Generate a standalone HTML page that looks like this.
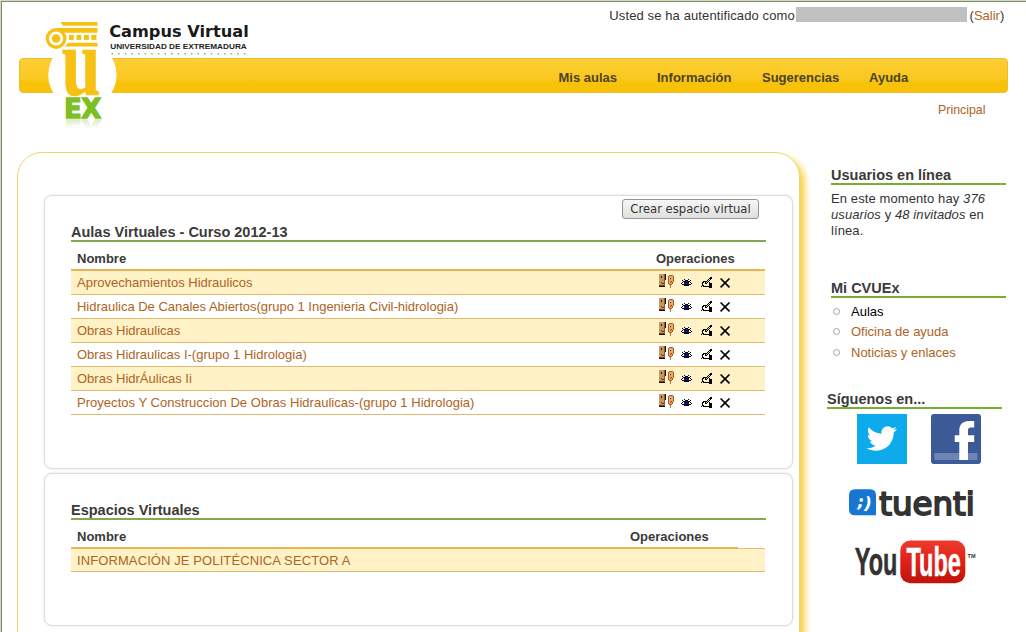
<!DOCTYPE html>
<html lang="es">
<head>
<meta charset="utf-8">
<title>Campus Virtual - Universidad de Extremadura</title>
<style>
html,body{margin:0;padding:0;}
body{width:1026px;height:632px;overflow:hidden;background:#fff;position:relative;font-family:"Liberation Sans",Arial,sans-serif;font-size:13px;color:#333;}
.abs{position:absolute;}
a{color:#ad6424;text-decoration:none;}
#frame-top{left:0;top:0;width:1026px;height:1px;background:#cfdcbd;}
#frame-top2{left:1px;top:1px;width:1025px;height:1px;background:#7c8a6c;}
#frame-left{left:0;top:0;width:1px;height:632px;background:#cfdcbd;}
#frame-left2{left:1px;top:1px;width:1px;height:631px;background:#7c8a6c;}
#nav{left:19px;top:58px;width:987px;height:33px;border:1px solid #f0bc2c;border-radius:4px;background:linear-gradient(#fbce32,#f9c720 62%,#f7c209 70%,#f7c207);}
#nav a{position:absolute;top:11px;font-weight:bold;font-size:13px;line-height:15px;color:#4b4323;white-space:nowrap;}
.lg{position:absolute;top:8px;font-size:13px;line-height:15px;white-space:nowrap;color:#333;}
#blk{left:796px;top:7px;width:171px;height:15px;background:#c0c0c0;}
#crumb{left:938px;top:103px;font-size:12.4px;line-height:14px;}
#main{left:17px;top:152px;width:781px;height:520px;border:1px solid #f1d468;border-radius:25px;box-shadow:5px 5px 6px #fbd24a;background:#fff;}
.box{border:1px solid #dcdcdc;border-radius:8px;box-shadow:0 0 3px #e4e4e4;background:#fff;}
h2{position:absolute;margin:0;font-size:14.5px;line-height:16px;font-weight:bold;color:#3a3a3a;white-space:nowrap;}
.gl{position:absolute;height:2px;background:#86a654;}
.gl.s{background:#7aae30;}
.th{position:absolute;font-weight:bold;font-size:13px;line-height:15px;color:#3a3a3a;}
.ol{position:absolute;height:2px;background:#e8b455;}
.row{position:absolute;left:71px;width:694px;height:23px;border-bottom:1px solid #e0bc72;}
.row.odd{background:#fef2c6;}
.row a{position:absolute;left:6px;top:4px;line-height:15px;white-space:nowrap;}
.ic{position:absolute;}
#btn{left:622px;top:199px;width:135px;height:18px;border:1px solid #949494;border-radius:3px;background:linear-gradient(#f6f6f6,#dfdfdf);font-family:"DejaVu Sans","Liberation Sans",sans-serif;font-size:11.6px;line-height:19px;text-align:center;color:#333;white-space:nowrap;}
.side{position:absolute;font-size:13px;line-height:16px;color:#333;letter-spacing:0.1px;}
ul{position:absolute;list-style:none;margin:0;padding:0;}
li{position:absolute;left:0;white-space:nowrap;line-height:15px;}
li i{position:absolute;left:-18px;top:4px;width:5px;height:5px;border:1px solid #a4a4a4;border-radius:50%;}
</style>
</head>
<body>
<div class="abs" id="nav">
  <a style="left:538.5px">Mis aulas</a>
  <a style="left:637px">Información</a>
  <a style="left:742px">Sugerencias</a>
  <a style="left:849px">Ayuda</a>
</div>

<!-- logo -->
<svg class="abs" style="left:40px;top:15px" width="220" height="120" viewBox="40 15 220 120">
  <defs>
    <linearGradient id="fade" x1="0" y1="0" x2="0" y2="1"><stop offset="0" stop-color="#fff" stop-opacity="0.3"/><stop offset="0.45" stop-color="#fff" stop-opacity="1"/><stop offset="1" stop-color="#fff" stop-opacity="1"/></linearGradient>
  </defs>
  <circle cx="82.4" cy="75" r="34.2" fill="#fff"/>
  <g fill="#f6c112">
    <path d="M60.4 21.9 H97.5 V25.7 H63.2 Z"/>
    <path d="M56 28 H97.5 V32.8 H60 Z"/>
    <circle cx="56.1" cy="38.5" r="10.4"/>
    <path d="M68 42.8 H97.5 V46.6 H65 Z"/>
    <rect x="69" y="34.9" width="4.8" height="5"/><rect x="76.5" y="34.9" width="4.8" height="5"/><rect x="84" y="34.9" width="4.9" height="5"/><rect x="91.4" y="34.9" width="5.1" height="5"/>
  </g>
  <circle cx="56.1" cy="38.5" r="5.7" fill="none" stroke="#fff" stroke-width="2.8"/>
  <text x="0" y="0" transform="translate(61.6,95) scale(0.72,1)" font-family="Liberation Serif, serif" font-weight="bold" font-size="97.5" fill="#f6c112" stroke="#f6c112" stroke-width="0.7">u</text>
  <text x="64.3" y="118" font-family="DejaVu Sans, sans-serif" font-weight="bold" font-size="26.6" textLength="36.8" lengthAdjust="spacingAndGlyphs" fill="#7dc026" stroke="#7dc026" stroke-width="1.6">EX</text>
  <g transform="translate(0,237.6) scale(1,-1)" opacity="0.4"><text x="64.3" y="118" font-family="DejaVu Sans, sans-serif" font-weight="bold" font-size="26.6" textLength="36.8" lengthAdjust="spacingAndGlyphs" fill="#7dc026" stroke="#7dc026" stroke-width="1.6">EX</text></g>
  <rect x="60" y="118.9" width="46" height="22" fill="url(#fade)"/>
  <text x="109.2" y="36.9" font-family="DejaVu Sans, sans-serif" font-weight="bold" font-size="15.8" textLength="139.6" lengthAdjust="spacingAndGlyphs" fill="#1a1a1a">Campus Virtual</text>
  <text x="110.2" y="49" font-family="Liberation Sans, sans-serif" font-weight="bold" font-size="8" textLength="136.6" lengthAdjust="spacingAndGlyphs" fill="#222">UNIVERSIDAD DE EXTREMADURA</text>
  <line x1="111.5" y1="53.8" x2="246" y2="53.8" stroke="#97c23c" stroke-width="1.6" stroke-dasharray="1.6 5.015"/>
</svg>

<div class="lg" style="left:609.3px;letter-spacing:0.115px">Usted se ha autentificado como</div><div class="abs" id="blk"></div><div class="lg" style="left:969.6px">(<a>Salir</a>)</div>
<div class="abs" id="crumb"><a>Principal</a></div>

<div class="abs" id="main"></div>
<div class="abs box" style="left:44px;top:195px;width:747px;height:272px;"></div>
<div class="abs box" style="left:44px;top:473px;width:747px;height:151px;"></div>

<div class="abs" id="btn">Crear espacio virtual</div>
<h2 style="left:71px;top:224px">Aulas Virtuales - Curso 2012-13</h2>
<div class="gl" style="left:71px;top:240px;width:695px"></div>
<div class="th" style="left:77px;top:251px">Nombre</div>
<div class="th" style="left:656px;top:251px">Operaciones</div>
<div class="ol" style="left:71px;top:269px;width:694px"></div>
<div class="row odd" style="top:271px"><a>Aprovechamientos Hidraulicos</a><svg class="ic" style="left:587px;top:2px" width="74" height="16" viewBox="0 0 74 16" shape-rendering="crispEdges"><rect x="1" y="1" width="5" height="1" fill="#c9965c"/><rect x="6" y="1" width="1" height="1" fill="#8a5a2a"/><rect x="7" y="1" width="1" height="1" fill="#1a0e05"/><rect x="1" y="2" width="5" height="1" fill="#c9965c"/><rect x="6" y="2" width="1" height="1" fill="#8a5a2a"/><rect x="7" y="2" width="1" height="1" fill="#1a0e05"/><rect x="1" y="3" width="2" height="1" fill="#c9965c"/><rect x="3" y="3" width="1" height="1" fill="#20120a"/><rect x="4" y="3" width="2" height="1" fill="#c9965c"/><rect x="6" y="3" width="1" height="1" fill="#8a5a2a"/><rect x="7" y="3" width="1" height="1" fill="#1a0e05"/><rect x="1" y="4" width="2" height="1" fill="#c9965c"/><rect x="3" y="4" width="1" height="1" fill="#20120a"/><rect x="4" y="4" width="2" height="1" fill="#c9965c"/><rect x="6" y="4" width="1" height="1" fill="#8a5a2a"/><rect x="7" y="4" width="1" height="1" fill="#1a0e05"/><rect x="1" y="5" width="5" height="1" fill="#c9965c"/><rect x="6" y="5" width="1" height="1" fill="#8a5a2a"/><rect x="7" y="5" width="1" height="1" fill="#1a0e05"/><rect x="1" y="6" width="5" height="1" fill="#c9965c"/><rect x="6" y="6" width="1" height="1" fill="#8a5a2a"/><rect x="7" y="6" width="1" height="1" fill="#1a0e05"/><rect x="1" y="7" width="5" height="1" fill="#c9965c"/><rect x="6" y="7" width="1" height="1" fill="#8a5a2a"/><rect x="1" y="8" width="5" height="1" fill="#c9965c"/><rect x="6" y="8" width="1" height="1" fill="#8a5a2a"/><rect x="1" y="9" width="2" height="1" fill="#c9965c"/><rect x="3" y="9" width="1" height="1" fill="#5a2a10"/><rect x="4" y="9" width="2" height="1" fill="#c9965c"/><rect x="6" y="9" width="1" height="1" fill="#8a5a2a"/><rect x="1" y="10" width="3" height="1" fill="#c9965c"/><rect x="4" y="10" width="2" height="1" fill="#5a2a10"/><rect x="6" y="10" width="1" height="1" fill="#8a5a2a"/><rect x="1" y="11" width="5" height="1" fill="#c9965c"/><rect x="6" y="11" width="1" height="1" fill="#8a5a2a"/><rect x="1" y="12" width="5" height="1" fill="#6a4018"/><rect x="6" y="12" width="1" height="1" fill="#8a5a2a"/><rect x="1" y="13" width="6" height="1" fill="#1a0e05"/><rect x="11" y="2" width="4" height="1" fill="#a85e22"/><rect x="10" y="3" width="1" height="1" fill="#a85e22"/><rect x="11" y="3" width="4" height="1" fill="#e8a766"/><rect x="15" y="3" width="1" height="1" fill="#a85e22"/><rect x="10" y="4" width="1" height="1" fill="#a85e22"/><rect x="11" y="4" width="1" height="1" fill="#e8a766"/><rect x="12" y="4" width="1" height="1" fill="#f6d9b8"/><rect x="13" y="4" width="2" height="1" fill="#e8a766"/><rect x="15" y="4" width="1" height="1" fill="#a85e22"/><rect x="10" y="5" width="1" height="1" fill="#a85e22"/><rect x="11" y="5" width="1" height="1" fill="#f6d9b8"/><rect x="12" y="5" width="1" height="1" fill="#20120a"/><rect x="13" y="5" width="2" height="1" fill="#e8a766"/><rect x="15" y="5" width="1" height="1" fill="#a85e22"/><rect x="10" y="6" width="1" height="1" fill="#a85e22"/><rect x="11" y="6" width="4" height="1" fill="#e8a766"/><rect x="15" y="6" width="1" height="1" fill="#a85e22"/><rect x="10" y="7" width="1" height="1" fill="#a85e22"/><rect x="11" y="7" width="4" height="1" fill="#e8a766"/><rect x="15" y="7" width="1" height="1" fill="#a85e22"/><rect x="10" y="8" width="1" height="1" fill="#a85e22"/><rect x="11" y="8" width="2" height="1" fill="#e8a766"/><rect x="13" y="8" width="1" height="1" fill="#b02a1c"/><rect x="14" y="8" width="1" height="1" fill="#e8a766"/><rect x="15" y="8" width="1" height="1" fill="#a85e22"/><rect x="10" y="9" width="1" height="1" fill="#a85e22"/><rect x="11" y="9" width="1" height="1" fill="#e8a766"/><rect x="12" y="9" width="1" height="1" fill="#b02a1c"/><rect x="13" y="9" width="1" height="1" fill="#e8a766"/><rect x="14" y="9" width="1" height="1" fill="#a85e22"/><rect x="10" y="10" width="1" height="1" fill="#a85e22"/><rect x="11" y="10" width="3" height="1" fill="#e8a766"/><rect x="14" y="10" width="1" height="1" fill="#a85e22"/><rect x="11" y="11" width="3" height="1" fill="#a85e22"/><rect x="12" y="12" width="1" height="1" fill="#a87a3c"/><rect x="12" y="13" width="1" height="1" fill="#a87a3c"/><rect x="12" y="14" width="1" height="1" fill="#a87a3c"/><rect x="26" y="6" width="1" height="1" fill="#000"/><rect x="30" y="6" width="1" height="1" fill="#000"/><rect x="24" y="7" width="1" height="1" fill="#000"/><rect x="27" y="7" width="3" height="1" fill="#000"/><rect x="32" y="7" width="1" height="1" fill="#000"/><rect x="25" y="8" width="2" height="1" fill="#000"/><rect x="27" y="8" width="3" height="1" fill="#10105c"/><rect x="30" y="8" width="2" height="1" fill="#000"/><rect x="24" y="9" width="1" height="1" fill="#000"/><rect x="25" y="9" width="1" height="1" fill="#fff"/><rect x="26" y="9" width="5" height="1" fill="#10105c"/><rect x="31" y="9" width="1" height="1" fill="#fff"/><rect x="32" y="9" width="1" height="1" fill="#000"/><rect x="23" y="10" width="1" height="1" fill="#000"/><rect x="24" y="10" width="2" height="1" fill="#fff"/><rect x="26" y="10" width="5" height="1" fill="#10105c"/><rect x="31" y="10" width="2" height="1" fill="#fff"/><rect x="33" y="10" width="1" height="1" fill="#000"/><rect x="24" y="11" width="2" height="1" fill="#000"/><rect x="26" y="11" width="5" height="1" fill="#10105c"/><rect x="31" y="11" width="2" height="1" fill="#000"/><rect x="26" y="12" width="5" height="1" fill="#000"/><rect x="52" y="4" width="2" height="1" fill="#000"/><rect x="51" y="5" width="3" height="1" fill="#000"/><rect x="50" y="6" width="1" height="1" fill="#000"/><rect x="51" y="6" width="1" height="1" fill="#e8dc5a"/><rect x="52" y="6" width="1" height="1" fill="#000"/><rect x="49" y="7" width="1" height="1" fill="#000"/><rect x="50" y="7" width="1" height="1" fill="#e8dc5a"/><rect x="51" y="7" width="1" height="1" fill="#000"/><rect x="45" y="8" width="4" height="1" fill="#000"/><rect x="49" y="8" width="1" height="1" fill="#e8dc5a"/><rect x="50" y="8" width="1" height="1" fill="#000"/><rect x="44" y="9" width="2" height="1" fill="#000"/><rect x="47" y="9" width="1" height="1" fill="#000"/><rect x="48" y="9" width="1" height="1" fill="#e8dc5a"/><rect x="49" y="9" width="1" height="1" fill="#000"/><rect x="51" y="9" width="1" height="1" fill="#000"/><rect x="44" y="10" width="1" height="1" fill="#000"/><rect x="47" y="10" width="2" height="1" fill="#000"/><rect x="51" y="10" width="3" height="1" fill="#000"/><rect x="44" y="11" width="1" height="1" fill="#000"/><rect x="51" y="11" width="3" height="1" fill="#000"/><rect x="44" y="12" width="2" height="1" fill="#000"/><rect x="51" y="12" width="3" height="1" fill="#000"/><rect x="43" y="13" width="1" height="1" fill="#000"/><rect x="45" y="13" width="9" height="1" fill="#000"/><rect x="51" y="14" width="3" height="1" fill="#000"/><path shape-rendering="auto" d="M62.6 5.5 L71.5 14.4 M71.5 5.5 L62.6 14.4" stroke="#000" stroke-width="1.7"/></svg></div>
<div class="row" style="top:295px"><a style="letter-spacing:-0.015px">Hidraulica De Canales Abiertos(grupo 1 Ingenieria Civil-hidrologia)</a><svg class="ic" style="left:587px;top:2px" width="74" height="16" viewBox="0 0 74 16" shape-rendering="crispEdges"><rect x="1" y="1" width="5" height="1" fill="#c9965c"/><rect x="6" y="1" width="1" height="1" fill="#8a5a2a"/><rect x="7" y="1" width="1" height="1" fill="#1a0e05"/><rect x="1" y="2" width="5" height="1" fill="#c9965c"/><rect x="6" y="2" width="1" height="1" fill="#8a5a2a"/><rect x="7" y="2" width="1" height="1" fill="#1a0e05"/><rect x="1" y="3" width="2" height="1" fill="#c9965c"/><rect x="3" y="3" width="1" height="1" fill="#20120a"/><rect x="4" y="3" width="2" height="1" fill="#c9965c"/><rect x="6" y="3" width="1" height="1" fill="#8a5a2a"/><rect x="7" y="3" width="1" height="1" fill="#1a0e05"/><rect x="1" y="4" width="2" height="1" fill="#c9965c"/><rect x="3" y="4" width="1" height="1" fill="#20120a"/><rect x="4" y="4" width="2" height="1" fill="#c9965c"/><rect x="6" y="4" width="1" height="1" fill="#8a5a2a"/><rect x="7" y="4" width="1" height="1" fill="#1a0e05"/><rect x="1" y="5" width="5" height="1" fill="#c9965c"/><rect x="6" y="5" width="1" height="1" fill="#8a5a2a"/><rect x="7" y="5" width="1" height="1" fill="#1a0e05"/><rect x="1" y="6" width="5" height="1" fill="#c9965c"/><rect x="6" y="6" width="1" height="1" fill="#8a5a2a"/><rect x="7" y="6" width="1" height="1" fill="#1a0e05"/><rect x="1" y="7" width="5" height="1" fill="#c9965c"/><rect x="6" y="7" width="1" height="1" fill="#8a5a2a"/><rect x="1" y="8" width="5" height="1" fill="#c9965c"/><rect x="6" y="8" width="1" height="1" fill="#8a5a2a"/><rect x="1" y="9" width="2" height="1" fill="#c9965c"/><rect x="3" y="9" width="1" height="1" fill="#5a2a10"/><rect x="4" y="9" width="2" height="1" fill="#c9965c"/><rect x="6" y="9" width="1" height="1" fill="#8a5a2a"/><rect x="1" y="10" width="3" height="1" fill="#c9965c"/><rect x="4" y="10" width="2" height="1" fill="#5a2a10"/><rect x="6" y="10" width="1" height="1" fill="#8a5a2a"/><rect x="1" y="11" width="5" height="1" fill="#c9965c"/><rect x="6" y="11" width="1" height="1" fill="#8a5a2a"/><rect x="1" y="12" width="5" height="1" fill="#6a4018"/><rect x="6" y="12" width="1" height="1" fill="#8a5a2a"/><rect x="1" y="13" width="6" height="1" fill="#1a0e05"/><rect x="11" y="2" width="4" height="1" fill="#a85e22"/><rect x="10" y="3" width="1" height="1" fill="#a85e22"/><rect x="11" y="3" width="4" height="1" fill="#e8a766"/><rect x="15" y="3" width="1" height="1" fill="#a85e22"/><rect x="10" y="4" width="1" height="1" fill="#a85e22"/><rect x="11" y="4" width="1" height="1" fill="#e8a766"/><rect x="12" y="4" width="1" height="1" fill="#f6d9b8"/><rect x="13" y="4" width="2" height="1" fill="#e8a766"/><rect x="15" y="4" width="1" height="1" fill="#a85e22"/><rect x="10" y="5" width="1" height="1" fill="#a85e22"/><rect x="11" y="5" width="1" height="1" fill="#f6d9b8"/><rect x="12" y="5" width="1" height="1" fill="#20120a"/><rect x="13" y="5" width="2" height="1" fill="#e8a766"/><rect x="15" y="5" width="1" height="1" fill="#a85e22"/><rect x="10" y="6" width="1" height="1" fill="#a85e22"/><rect x="11" y="6" width="4" height="1" fill="#e8a766"/><rect x="15" y="6" width="1" height="1" fill="#a85e22"/><rect x="10" y="7" width="1" height="1" fill="#a85e22"/><rect x="11" y="7" width="4" height="1" fill="#e8a766"/><rect x="15" y="7" width="1" height="1" fill="#a85e22"/><rect x="10" y="8" width="1" height="1" fill="#a85e22"/><rect x="11" y="8" width="2" height="1" fill="#e8a766"/><rect x="13" y="8" width="1" height="1" fill="#b02a1c"/><rect x="14" y="8" width="1" height="1" fill="#e8a766"/><rect x="15" y="8" width="1" height="1" fill="#a85e22"/><rect x="10" y="9" width="1" height="1" fill="#a85e22"/><rect x="11" y="9" width="1" height="1" fill="#e8a766"/><rect x="12" y="9" width="1" height="1" fill="#b02a1c"/><rect x="13" y="9" width="1" height="1" fill="#e8a766"/><rect x="14" y="9" width="1" height="1" fill="#a85e22"/><rect x="10" y="10" width="1" height="1" fill="#a85e22"/><rect x="11" y="10" width="3" height="1" fill="#e8a766"/><rect x="14" y="10" width="1" height="1" fill="#a85e22"/><rect x="11" y="11" width="3" height="1" fill="#a85e22"/><rect x="12" y="12" width="1" height="1" fill="#a87a3c"/><rect x="12" y="13" width="1" height="1" fill="#a87a3c"/><rect x="12" y="14" width="1" height="1" fill="#a87a3c"/><rect x="26" y="6" width="1" height="1" fill="#000"/><rect x="30" y="6" width="1" height="1" fill="#000"/><rect x="24" y="7" width="1" height="1" fill="#000"/><rect x="27" y="7" width="3" height="1" fill="#000"/><rect x="32" y="7" width="1" height="1" fill="#000"/><rect x="25" y="8" width="2" height="1" fill="#000"/><rect x="27" y="8" width="3" height="1" fill="#10105c"/><rect x="30" y="8" width="2" height="1" fill="#000"/><rect x="24" y="9" width="1" height="1" fill="#000"/><rect x="25" y="9" width="1" height="1" fill="#fff"/><rect x="26" y="9" width="5" height="1" fill="#10105c"/><rect x="31" y="9" width="1" height="1" fill="#fff"/><rect x="32" y="9" width="1" height="1" fill="#000"/><rect x="23" y="10" width="1" height="1" fill="#000"/><rect x="24" y="10" width="2" height="1" fill="#fff"/><rect x="26" y="10" width="5" height="1" fill="#10105c"/><rect x="31" y="10" width="2" height="1" fill="#fff"/><rect x="33" y="10" width="1" height="1" fill="#000"/><rect x="24" y="11" width="2" height="1" fill="#000"/><rect x="26" y="11" width="5" height="1" fill="#10105c"/><rect x="31" y="11" width="2" height="1" fill="#000"/><rect x="26" y="12" width="5" height="1" fill="#000"/><rect x="52" y="4" width="2" height="1" fill="#000"/><rect x="51" y="5" width="3" height="1" fill="#000"/><rect x="50" y="6" width="1" height="1" fill="#000"/><rect x="51" y="6" width="1" height="1" fill="#e8dc5a"/><rect x="52" y="6" width="1" height="1" fill="#000"/><rect x="49" y="7" width="1" height="1" fill="#000"/><rect x="50" y="7" width="1" height="1" fill="#e8dc5a"/><rect x="51" y="7" width="1" height="1" fill="#000"/><rect x="45" y="8" width="4" height="1" fill="#000"/><rect x="49" y="8" width="1" height="1" fill="#e8dc5a"/><rect x="50" y="8" width="1" height="1" fill="#000"/><rect x="44" y="9" width="2" height="1" fill="#000"/><rect x="47" y="9" width="1" height="1" fill="#000"/><rect x="48" y="9" width="1" height="1" fill="#e8dc5a"/><rect x="49" y="9" width="1" height="1" fill="#000"/><rect x="51" y="9" width="1" height="1" fill="#000"/><rect x="44" y="10" width="1" height="1" fill="#000"/><rect x="47" y="10" width="2" height="1" fill="#000"/><rect x="51" y="10" width="3" height="1" fill="#000"/><rect x="44" y="11" width="1" height="1" fill="#000"/><rect x="51" y="11" width="3" height="1" fill="#000"/><rect x="44" y="12" width="2" height="1" fill="#000"/><rect x="51" y="12" width="3" height="1" fill="#000"/><rect x="43" y="13" width="1" height="1" fill="#000"/><rect x="45" y="13" width="9" height="1" fill="#000"/><rect x="51" y="14" width="3" height="1" fill="#000"/><path shape-rendering="auto" d="M62.6 5.5 L71.5 14.4 M71.5 5.5 L62.6 14.4" stroke="#000" stroke-width="1.7"/></svg></div>
<div class="row odd" style="top:319px"><a>Obras Hidraulicas</a><svg class="ic" style="left:587px;top:2px" width="74" height="16" viewBox="0 0 74 16" shape-rendering="crispEdges"><rect x="1" y="1" width="5" height="1" fill="#c9965c"/><rect x="6" y="1" width="1" height="1" fill="#8a5a2a"/><rect x="7" y="1" width="1" height="1" fill="#1a0e05"/><rect x="1" y="2" width="5" height="1" fill="#c9965c"/><rect x="6" y="2" width="1" height="1" fill="#8a5a2a"/><rect x="7" y="2" width="1" height="1" fill="#1a0e05"/><rect x="1" y="3" width="2" height="1" fill="#c9965c"/><rect x="3" y="3" width="1" height="1" fill="#20120a"/><rect x="4" y="3" width="2" height="1" fill="#c9965c"/><rect x="6" y="3" width="1" height="1" fill="#8a5a2a"/><rect x="7" y="3" width="1" height="1" fill="#1a0e05"/><rect x="1" y="4" width="2" height="1" fill="#c9965c"/><rect x="3" y="4" width="1" height="1" fill="#20120a"/><rect x="4" y="4" width="2" height="1" fill="#c9965c"/><rect x="6" y="4" width="1" height="1" fill="#8a5a2a"/><rect x="7" y="4" width="1" height="1" fill="#1a0e05"/><rect x="1" y="5" width="5" height="1" fill="#c9965c"/><rect x="6" y="5" width="1" height="1" fill="#8a5a2a"/><rect x="7" y="5" width="1" height="1" fill="#1a0e05"/><rect x="1" y="6" width="5" height="1" fill="#c9965c"/><rect x="6" y="6" width="1" height="1" fill="#8a5a2a"/><rect x="7" y="6" width="1" height="1" fill="#1a0e05"/><rect x="1" y="7" width="5" height="1" fill="#c9965c"/><rect x="6" y="7" width="1" height="1" fill="#8a5a2a"/><rect x="1" y="8" width="5" height="1" fill="#c9965c"/><rect x="6" y="8" width="1" height="1" fill="#8a5a2a"/><rect x="1" y="9" width="2" height="1" fill="#c9965c"/><rect x="3" y="9" width="1" height="1" fill="#5a2a10"/><rect x="4" y="9" width="2" height="1" fill="#c9965c"/><rect x="6" y="9" width="1" height="1" fill="#8a5a2a"/><rect x="1" y="10" width="3" height="1" fill="#c9965c"/><rect x="4" y="10" width="2" height="1" fill="#5a2a10"/><rect x="6" y="10" width="1" height="1" fill="#8a5a2a"/><rect x="1" y="11" width="5" height="1" fill="#c9965c"/><rect x="6" y="11" width="1" height="1" fill="#8a5a2a"/><rect x="1" y="12" width="5" height="1" fill="#6a4018"/><rect x="6" y="12" width="1" height="1" fill="#8a5a2a"/><rect x="1" y="13" width="6" height="1" fill="#1a0e05"/><rect x="11" y="2" width="4" height="1" fill="#a85e22"/><rect x="10" y="3" width="1" height="1" fill="#a85e22"/><rect x="11" y="3" width="4" height="1" fill="#e8a766"/><rect x="15" y="3" width="1" height="1" fill="#a85e22"/><rect x="10" y="4" width="1" height="1" fill="#a85e22"/><rect x="11" y="4" width="1" height="1" fill="#e8a766"/><rect x="12" y="4" width="1" height="1" fill="#f6d9b8"/><rect x="13" y="4" width="2" height="1" fill="#e8a766"/><rect x="15" y="4" width="1" height="1" fill="#a85e22"/><rect x="10" y="5" width="1" height="1" fill="#a85e22"/><rect x="11" y="5" width="1" height="1" fill="#f6d9b8"/><rect x="12" y="5" width="1" height="1" fill="#20120a"/><rect x="13" y="5" width="2" height="1" fill="#e8a766"/><rect x="15" y="5" width="1" height="1" fill="#a85e22"/><rect x="10" y="6" width="1" height="1" fill="#a85e22"/><rect x="11" y="6" width="4" height="1" fill="#e8a766"/><rect x="15" y="6" width="1" height="1" fill="#a85e22"/><rect x="10" y="7" width="1" height="1" fill="#a85e22"/><rect x="11" y="7" width="4" height="1" fill="#e8a766"/><rect x="15" y="7" width="1" height="1" fill="#a85e22"/><rect x="10" y="8" width="1" height="1" fill="#a85e22"/><rect x="11" y="8" width="2" height="1" fill="#e8a766"/><rect x="13" y="8" width="1" height="1" fill="#b02a1c"/><rect x="14" y="8" width="1" height="1" fill="#e8a766"/><rect x="15" y="8" width="1" height="1" fill="#a85e22"/><rect x="10" y="9" width="1" height="1" fill="#a85e22"/><rect x="11" y="9" width="1" height="1" fill="#e8a766"/><rect x="12" y="9" width="1" height="1" fill="#b02a1c"/><rect x="13" y="9" width="1" height="1" fill="#e8a766"/><rect x="14" y="9" width="1" height="1" fill="#a85e22"/><rect x="10" y="10" width="1" height="1" fill="#a85e22"/><rect x="11" y="10" width="3" height="1" fill="#e8a766"/><rect x="14" y="10" width="1" height="1" fill="#a85e22"/><rect x="11" y="11" width="3" height="1" fill="#a85e22"/><rect x="12" y="12" width="1" height="1" fill="#a87a3c"/><rect x="12" y="13" width="1" height="1" fill="#a87a3c"/><rect x="12" y="14" width="1" height="1" fill="#a87a3c"/><rect x="26" y="6" width="1" height="1" fill="#000"/><rect x="30" y="6" width="1" height="1" fill="#000"/><rect x="24" y="7" width="1" height="1" fill="#000"/><rect x="27" y="7" width="3" height="1" fill="#000"/><rect x="32" y="7" width="1" height="1" fill="#000"/><rect x="25" y="8" width="2" height="1" fill="#000"/><rect x="27" y="8" width="3" height="1" fill="#10105c"/><rect x="30" y="8" width="2" height="1" fill="#000"/><rect x="24" y="9" width="1" height="1" fill="#000"/><rect x="25" y="9" width="1" height="1" fill="#fff"/><rect x="26" y="9" width="5" height="1" fill="#10105c"/><rect x="31" y="9" width="1" height="1" fill="#fff"/><rect x="32" y="9" width="1" height="1" fill="#000"/><rect x="23" y="10" width="1" height="1" fill="#000"/><rect x="24" y="10" width="2" height="1" fill="#fff"/><rect x="26" y="10" width="5" height="1" fill="#10105c"/><rect x="31" y="10" width="2" height="1" fill="#fff"/><rect x="33" y="10" width="1" height="1" fill="#000"/><rect x="24" y="11" width="2" height="1" fill="#000"/><rect x="26" y="11" width="5" height="1" fill="#10105c"/><rect x="31" y="11" width="2" height="1" fill="#000"/><rect x="26" y="12" width="5" height="1" fill="#000"/><rect x="52" y="4" width="2" height="1" fill="#000"/><rect x="51" y="5" width="3" height="1" fill="#000"/><rect x="50" y="6" width="1" height="1" fill="#000"/><rect x="51" y="6" width="1" height="1" fill="#e8dc5a"/><rect x="52" y="6" width="1" height="1" fill="#000"/><rect x="49" y="7" width="1" height="1" fill="#000"/><rect x="50" y="7" width="1" height="1" fill="#e8dc5a"/><rect x="51" y="7" width="1" height="1" fill="#000"/><rect x="45" y="8" width="4" height="1" fill="#000"/><rect x="49" y="8" width="1" height="1" fill="#e8dc5a"/><rect x="50" y="8" width="1" height="1" fill="#000"/><rect x="44" y="9" width="2" height="1" fill="#000"/><rect x="47" y="9" width="1" height="1" fill="#000"/><rect x="48" y="9" width="1" height="1" fill="#e8dc5a"/><rect x="49" y="9" width="1" height="1" fill="#000"/><rect x="51" y="9" width="1" height="1" fill="#000"/><rect x="44" y="10" width="1" height="1" fill="#000"/><rect x="47" y="10" width="2" height="1" fill="#000"/><rect x="51" y="10" width="3" height="1" fill="#000"/><rect x="44" y="11" width="1" height="1" fill="#000"/><rect x="51" y="11" width="3" height="1" fill="#000"/><rect x="44" y="12" width="2" height="1" fill="#000"/><rect x="51" y="12" width="3" height="1" fill="#000"/><rect x="43" y="13" width="1" height="1" fill="#000"/><rect x="45" y="13" width="9" height="1" fill="#000"/><rect x="51" y="14" width="3" height="1" fill="#000"/><path shape-rendering="auto" d="M62.6 5.5 L71.5 14.4 M71.5 5.5 L62.6 14.4" stroke="#000" stroke-width="1.7"/></svg></div>
<div class="row" style="top:343px"><a>Obras Hidraulicas I-(grupo 1 Hidrologia)</a><svg class="ic" style="left:587px;top:2px" width="74" height="16" viewBox="0 0 74 16" shape-rendering="crispEdges"><rect x="1" y="1" width="5" height="1" fill="#c9965c"/><rect x="6" y="1" width="1" height="1" fill="#8a5a2a"/><rect x="7" y="1" width="1" height="1" fill="#1a0e05"/><rect x="1" y="2" width="5" height="1" fill="#c9965c"/><rect x="6" y="2" width="1" height="1" fill="#8a5a2a"/><rect x="7" y="2" width="1" height="1" fill="#1a0e05"/><rect x="1" y="3" width="2" height="1" fill="#c9965c"/><rect x="3" y="3" width="1" height="1" fill="#20120a"/><rect x="4" y="3" width="2" height="1" fill="#c9965c"/><rect x="6" y="3" width="1" height="1" fill="#8a5a2a"/><rect x="7" y="3" width="1" height="1" fill="#1a0e05"/><rect x="1" y="4" width="2" height="1" fill="#c9965c"/><rect x="3" y="4" width="1" height="1" fill="#20120a"/><rect x="4" y="4" width="2" height="1" fill="#c9965c"/><rect x="6" y="4" width="1" height="1" fill="#8a5a2a"/><rect x="7" y="4" width="1" height="1" fill="#1a0e05"/><rect x="1" y="5" width="5" height="1" fill="#c9965c"/><rect x="6" y="5" width="1" height="1" fill="#8a5a2a"/><rect x="7" y="5" width="1" height="1" fill="#1a0e05"/><rect x="1" y="6" width="5" height="1" fill="#c9965c"/><rect x="6" y="6" width="1" height="1" fill="#8a5a2a"/><rect x="7" y="6" width="1" height="1" fill="#1a0e05"/><rect x="1" y="7" width="5" height="1" fill="#c9965c"/><rect x="6" y="7" width="1" height="1" fill="#8a5a2a"/><rect x="1" y="8" width="5" height="1" fill="#c9965c"/><rect x="6" y="8" width="1" height="1" fill="#8a5a2a"/><rect x="1" y="9" width="2" height="1" fill="#c9965c"/><rect x="3" y="9" width="1" height="1" fill="#5a2a10"/><rect x="4" y="9" width="2" height="1" fill="#c9965c"/><rect x="6" y="9" width="1" height="1" fill="#8a5a2a"/><rect x="1" y="10" width="3" height="1" fill="#c9965c"/><rect x="4" y="10" width="2" height="1" fill="#5a2a10"/><rect x="6" y="10" width="1" height="1" fill="#8a5a2a"/><rect x="1" y="11" width="5" height="1" fill="#c9965c"/><rect x="6" y="11" width="1" height="1" fill="#8a5a2a"/><rect x="1" y="12" width="5" height="1" fill="#6a4018"/><rect x="6" y="12" width="1" height="1" fill="#8a5a2a"/><rect x="1" y="13" width="6" height="1" fill="#1a0e05"/><rect x="11" y="2" width="4" height="1" fill="#a85e22"/><rect x="10" y="3" width="1" height="1" fill="#a85e22"/><rect x="11" y="3" width="4" height="1" fill="#e8a766"/><rect x="15" y="3" width="1" height="1" fill="#a85e22"/><rect x="10" y="4" width="1" height="1" fill="#a85e22"/><rect x="11" y="4" width="1" height="1" fill="#e8a766"/><rect x="12" y="4" width="1" height="1" fill="#f6d9b8"/><rect x="13" y="4" width="2" height="1" fill="#e8a766"/><rect x="15" y="4" width="1" height="1" fill="#a85e22"/><rect x="10" y="5" width="1" height="1" fill="#a85e22"/><rect x="11" y="5" width="1" height="1" fill="#f6d9b8"/><rect x="12" y="5" width="1" height="1" fill="#20120a"/><rect x="13" y="5" width="2" height="1" fill="#e8a766"/><rect x="15" y="5" width="1" height="1" fill="#a85e22"/><rect x="10" y="6" width="1" height="1" fill="#a85e22"/><rect x="11" y="6" width="4" height="1" fill="#e8a766"/><rect x="15" y="6" width="1" height="1" fill="#a85e22"/><rect x="10" y="7" width="1" height="1" fill="#a85e22"/><rect x="11" y="7" width="4" height="1" fill="#e8a766"/><rect x="15" y="7" width="1" height="1" fill="#a85e22"/><rect x="10" y="8" width="1" height="1" fill="#a85e22"/><rect x="11" y="8" width="2" height="1" fill="#e8a766"/><rect x="13" y="8" width="1" height="1" fill="#b02a1c"/><rect x="14" y="8" width="1" height="1" fill="#e8a766"/><rect x="15" y="8" width="1" height="1" fill="#a85e22"/><rect x="10" y="9" width="1" height="1" fill="#a85e22"/><rect x="11" y="9" width="1" height="1" fill="#e8a766"/><rect x="12" y="9" width="1" height="1" fill="#b02a1c"/><rect x="13" y="9" width="1" height="1" fill="#e8a766"/><rect x="14" y="9" width="1" height="1" fill="#a85e22"/><rect x="10" y="10" width="1" height="1" fill="#a85e22"/><rect x="11" y="10" width="3" height="1" fill="#e8a766"/><rect x="14" y="10" width="1" height="1" fill="#a85e22"/><rect x="11" y="11" width="3" height="1" fill="#a85e22"/><rect x="12" y="12" width="1" height="1" fill="#a87a3c"/><rect x="12" y="13" width="1" height="1" fill="#a87a3c"/><rect x="12" y="14" width="1" height="1" fill="#a87a3c"/><rect x="26" y="6" width="1" height="1" fill="#000"/><rect x="30" y="6" width="1" height="1" fill="#000"/><rect x="24" y="7" width="1" height="1" fill="#000"/><rect x="27" y="7" width="3" height="1" fill="#000"/><rect x="32" y="7" width="1" height="1" fill="#000"/><rect x="25" y="8" width="2" height="1" fill="#000"/><rect x="27" y="8" width="3" height="1" fill="#10105c"/><rect x="30" y="8" width="2" height="1" fill="#000"/><rect x="24" y="9" width="1" height="1" fill="#000"/><rect x="25" y="9" width="1" height="1" fill="#fff"/><rect x="26" y="9" width="5" height="1" fill="#10105c"/><rect x="31" y="9" width="1" height="1" fill="#fff"/><rect x="32" y="9" width="1" height="1" fill="#000"/><rect x="23" y="10" width="1" height="1" fill="#000"/><rect x="24" y="10" width="2" height="1" fill="#fff"/><rect x="26" y="10" width="5" height="1" fill="#10105c"/><rect x="31" y="10" width="2" height="1" fill="#fff"/><rect x="33" y="10" width="1" height="1" fill="#000"/><rect x="24" y="11" width="2" height="1" fill="#000"/><rect x="26" y="11" width="5" height="1" fill="#10105c"/><rect x="31" y="11" width="2" height="1" fill="#000"/><rect x="26" y="12" width="5" height="1" fill="#000"/><rect x="52" y="4" width="2" height="1" fill="#000"/><rect x="51" y="5" width="3" height="1" fill="#000"/><rect x="50" y="6" width="1" height="1" fill="#000"/><rect x="51" y="6" width="1" height="1" fill="#e8dc5a"/><rect x="52" y="6" width="1" height="1" fill="#000"/><rect x="49" y="7" width="1" height="1" fill="#000"/><rect x="50" y="7" width="1" height="1" fill="#e8dc5a"/><rect x="51" y="7" width="1" height="1" fill="#000"/><rect x="45" y="8" width="4" height="1" fill="#000"/><rect x="49" y="8" width="1" height="1" fill="#e8dc5a"/><rect x="50" y="8" width="1" height="1" fill="#000"/><rect x="44" y="9" width="2" height="1" fill="#000"/><rect x="47" y="9" width="1" height="1" fill="#000"/><rect x="48" y="9" width="1" height="1" fill="#e8dc5a"/><rect x="49" y="9" width="1" height="1" fill="#000"/><rect x="51" y="9" width="1" height="1" fill="#000"/><rect x="44" y="10" width="1" height="1" fill="#000"/><rect x="47" y="10" width="2" height="1" fill="#000"/><rect x="51" y="10" width="3" height="1" fill="#000"/><rect x="44" y="11" width="1" height="1" fill="#000"/><rect x="51" y="11" width="3" height="1" fill="#000"/><rect x="44" y="12" width="2" height="1" fill="#000"/><rect x="51" y="12" width="3" height="1" fill="#000"/><rect x="43" y="13" width="1" height="1" fill="#000"/><rect x="45" y="13" width="9" height="1" fill="#000"/><rect x="51" y="14" width="3" height="1" fill="#000"/><path shape-rendering="auto" d="M62.6 5.5 L71.5 14.4 M71.5 5.5 L62.6 14.4" stroke="#000" stroke-width="1.7"/></svg></div>
<div class="row odd" style="top:367px"><a>Obras HidrÁulicas Ii</a><svg class="ic" style="left:587px;top:2px" width="74" height="16" viewBox="0 0 74 16" shape-rendering="crispEdges"><rect x="1" y="1" width="5" height="1" fill="#c9965c"/><rect x="6" y="1" width="1" height="1" fill="#8a5a2a"/><rect x="7" y="1" width="1" height="1" fill="#1a0e05"/><rect x="1" y="2" width="5" height="1" fill="#c9965c"/><rect x="6" y="2" width="1" height="1" fill="#8a5a2a"/><rect x="7" y="2" width="1" height="1" fill="#1a0e05"/><rect x="1" y="3" width="2" height="1" fill="#c9965c"/><rect x="3" y="3" width="1" height="1" fill="#20120a"/><rect x="4" y="3" width="2" height="1" fill="#c9965c"/><rect x="6" y="3" width="1" height="1" fill="#8a5a2a"/><rect x="7" y="3" width="1" height="1" fill="#1a0e05"/><rect x="1" y="4" width="2" height="1" fill="#c9965c"/><rect x="3" y="4" width="1" height="1" fill="#20120a"/><rect x="4" y="4" width="2" height="1" fill="#c9965c"/><rect x="6" y="4" width="1" height="1" fill="#8a5a2a"/><rect x="7" y="4" width="1" height="1" fill="#1a0e05"/><rect x="1" y="5" width="5" height="1" fill="#c9965c"/><rect x="6" y="5" width="1" height="1" fill="#8a5a2a"/><rect x="7" y="5" width="1" height="1" fill="#1a0e05"/><rect x="1" y="6" width="5" height="1" fill="#c9965c"/><rect x="6" y="6" width="1" height="1" fill="#8a5a2a"/><rect x="7" y="6" width="1" height="1" fill="#1a0e05"/><rect x="1" y="7" width="5" height="1" fill="#c9965c"/><rect x="6" y="7" width="1" height="1" fill="#8a5a2a"/><rect x="1" y="8" width="5" height="1" fill="#c9965c"/><rect x="6" y="8" width="1" height="1" fill="#8a5a2a"/><rect x="1" y="9" width="2" height="1" fill="#c9965c"/><rect x="3" y="9" width="1" height="1" fill="#5a2a10"/><rect x="4" y="9" width="2" height="1" fill="#c9965c"/><rect x="6" y="9" width="1" height="1" fill="#8a5a2a"/><rect x="1" y="10" width="3" height="1" fill="#c9965c"/><rect x="4" y="10" width="2" height="1" fill="#5a2a10"/><rect x="6" y="10" width="1" height="1" fill="#8a5a2a"/><rect x="1" y="11" width="5" height="1" fill="#c9965c"/><rect x="6" y="11" width="1" height="1" fill="#8a5a2a"/><rect x="1" y="12" width="5" height="1" fill="#6a4018"/><rect x="6" y="12" width="1" height="1" fill="#8a5a2a"/><rect x="1" y="13" width="6" height="1" fill="#1a0e05"/><rect x="11" y="2" width="4" height="1" fill="#a85e22"/><rect x="10" y="3" width="1" height="1" fill="#a85e22"/><rect x="11" y="3" width="4" height="1" fill="#e8a766"/><rect x="15" y="3" width="1" height="1" fill="#a85e22"/><rect x="10" y="4" width="1" height="1" fill="#a85e22"/><rect x="11" y="4" width="1" height="1" fill="#e8a766"/><rect x="12" y="4" width="1" height="1" fill="#f6d9b8"/><rect x="13" y="4" width="2" height="1" fill="#e8a766"/><rect x="15" y="4" width="1" height="1" fill="#a85e22"/><rect x="10" y="5" width="1" height="1" fill="#a85e22"/><rect x="11" y="5" width="1" height="1" fill="#f6d9b8"/><rect x="12" y="5" width="1" height="1" fill="#20120a"/><rect x="13" y="5" width="2" height="1" fill="#e8a766"/><rect x="15" y="5" width="1" height="1" fill="#a85e22"/><rect x="10" y="6" width="1" height="1" fill="#a85e22"/><rect x="11" y="6" width="4" height="1" fill="#e8a766"/><rect x="15" y="6" width="1" height="1" fill="#a85e22"/><rect x="10" y="7" width="1" height="1" fill="#a85e22"/><rect x="11" y="7" width="4" height="1" fill="#e8a766"/><rect x="15" y="7" width="1" height="1" fill="#a85e22"/><rect x="10" y="8" width="1" height="1" fill="#a85e22"/><rect x="11" y="8" width="2" height="1" fill="#e8a766"/><rect x="13" y="8" width="1" height="1" fill="#b02a1c"/><rect x="14" y="8" width="1" height="1" fill="#e8a766"/><rect x="15" y="8" width="1" height="1" fill="#a85e22"/><rect x="10" y="9" width="1" height="1" fill="#a85e22"/><rect x="11" y="9" width="1" height="1" fill="#e8a766"/><rect x="12" y="9" width="1" height="1" fill="#b02a1c"/><rect x="13" y="9" width="1" height="1" fill="#e8a766"/><rect x="14" y="9" width="1" height="1" fill="#a85e22"/><rect x="10" y="10" width="1" height="1" fill="#a85e22"/><rect x="11" y="10" width="3" height="1" fill="#e8a766"/><rect x="14" y="10" width="1" height="1" fill="#a85e22"/><rect x="11" y="11" width="3" height="1" fill="#a85e22"/><rect x="12" y="12" width="1" height="1" fill="#a87a3c"/><rect x="12" y="13" width="1" height="1" fill="#a87a3c"/><rect x="12" y="14" width="1" height="1" fill="#a87a3c"/><rect x="26" y="6" width="1" height="1" fill="#000"/><rect x="30" y="6" width="1" height="1" fill="#000"/><rect x="24" y="7" width="1" height="1" fill="#000"/><rect x="27" y="7" width="3" height="1" fill="#000"/><rect x="32" y="7" width="1" height="1" fill="#000"/><rect x="25" y="8" width="2" height="1" fill="#000"/><rect x="27" y="8" width="3" height="1" fill="#10105c"/><rect x="30" y="8" width="2" height="1" fill="#000"/><rect x="24" y="9" width="1" height="1" fill="#000"/><rect x="25" y="9" width="1" height="1" fill="#fff"/><rect x="26" y="9" width="5" height="1" fill="#10105c"/><rect x="31" y="9" width="1" height="1" fill="#fff"/><rect x="32" y="9" width="1" height="1" fill="#000"/><rect x="23" y="10" width="1" height="1" fill="#000"/><rect x="24" y="10" width="2" height="1" fill="#fff"/><rect x="26" y="10" width="5" height="1" fill="#10105c"/><rect x="31" y="10" width="2" height="1" fill="#fff"/><rect x="33" y="10" width="1" height="1" fill="#000"/><rect x="24" y="11" width="2" height="1" fill="#000"/><rect x="26" y="11" width="5" height="1" fill="#10105c"/><rect x="31" y="11" width="2" height="1" fill="#000"/><rect x="26" y="12" width="5" height="1" fill="#000"/><rect x="52" y="4" width="2" height="1" fill="#000"/><rect x="51" y="5" width="3" height="1" fill="#000"/><rect x="50" y="6" width="1" height="1" fill="#000"/><rect x="51" y="6" width="1" height="1" fill="#e8dc5a"/><rect x="52" y="6" width="1" height="1" fill="#000"/><rect x="49" y="7" width="1" height="1" fill="#000"/><rect x="50" y="7" width="1" height="1" fill="#e8dc5a"/><rect x="51" y="7" width="1" height="1" fill="#000"/><rect x="45" y="8" width="4" height="1" fill="#000"/><rect x="49" y="8" width="1" height="1" fill="#e8dc5a"/><rect x="50" y="8" width="1" height="1" fill="#000"/><rect x="44" y="9" width="2" height="1" fill="#000"/><rect x="47" y="9" width="1" height="1" fill="#000"/><rect x="48" y="9" width="1" height="1" fill="#e8dc5a"/><rect x="49" y="9" width="1" height="1" fill="#000"/><rect x="51" y="9" width="1" height="1" fill="#000"/><rect x="44" y="10" width="1" height="1" fill="#000"/><rect x="47" y="10" width="2" height="1" fill="#000"/><rect x="51" y="10" width="3" height="1" fill="#000"/><rect x="44" y="11" width="1" height="1" fill="#000"/><rect x="51" y="11" width="3" height="1" fill="#000"/><rect x="44" y="12" width="2" height="1" fill="#000"/><rect x="51" y="12" width="3" height="1" fill="#000"/><rect x="43" y="13" width="1" height="1" fill="#000"/><rect x="45" y="13" width="9" height="1" fill="#000"/><rect x="51" y="14" width="3" height="1" fill="#000"/><path shape-rendering="auto" d="M62.6 5.5 L71.5 14.4 M71.5 5.5 L62.6 14.4" stroke="#000" stroke-width="1.7"/></svg></div>
<div class="row" style="top:391px"><a style="letter-spacing:0.03px">Proyectos Y Construccion De Obras Hidraulicas-(grupo 1 Hidrologia)</a><svg class="ic" style="left:587px;top:2px" width="74" height="16" viewBox="0 0 74 16" shape-rendering="crispEdges"><rect x="1" y="1" width="5" height="1" fill="#c9965c"/><rect x="6" y="1" width="1" height="1" fill="#8a5a2a"/><rect x="7" y="1" width="1" height="1" fill="#1a0e05"/><rect x="1" y="2" width="5" height="1" fill="#c9965c"/><rect x="6" y="2" width="1" height="1" fill="#8a5a2a"/><rect x="7" y="2" width="1" height="1" fill="#1a0e05"/><rect x="1" y="3" width="2" height="1" fill="#c9965c"/><rect x="3" y="3" width="1" height="1" fill="#20120a"/><rect x="4" y="3" width="2" height="1" fill="#c9965c"/><rect x="6" y="3" width="1" height="1" fill="#8a5a2a"/><rect x="7" y="3" width="1" height="1" fill="#1a0e05"/><rect x="1" y="4" width="2" height="1" fill="#c9965c"/><rect x="3" y="4" width="1" height="1" fill="#20120a"/><rect x="4" y="4" width="2" height="1" fill="#c9965c"/><rect x="6" y="4" width="1" height="1" fill="#8a5a2a"/><rect x="7" y="4" width="1" height="1" fill="#1a0e05"/><rect x="1" y="5" width="5" height="1" fill="#c9965c"/><rect x="6" y="5" width="1" height="1" fill="#8a5a2a"/><rect x="7" y="5" width="1" height="1" fill="#1a0e05"/><rect x="1" y="6" width="5" height="1" fill="#c9965c"/><rect x="6" y="6" width="1" height="1" fill="#8a5a2a"/><rect x="7" y="6" width="1" height="1" fill="#1a0e05"/><rect x="1" y="7" width="5" height="1" fill="#c9965c"/><rect x="6" y="7" width="1" height="1" fill="#8a5a2a"/><rect x="1" y="8" width="5" height="1" fill="#c9965c"/><rect x="6" y="8" width="1" height="1" fill="#8a5a2a"/><rect x="1" y="9" width="2" height="1" fill="#c9965c"/><rect x="3" y="9" width="1" height="1" fill="#5a2a10"/><rect x="4" y="9" width="2" height="1" fill="#c9965c"/><rect x="6" y="9" width="1" height="1" fill="#8a5a2a"/><rect x="1" y="10" width="3" height="1" fill="#c9965c"/><rect x="4" y="10" width="2" height="1" fill="#5a2a10"/><rect x="6" y="10" width="1" height="1" fill="#8a5a2a"/><rect x="1" y="11" width="5" height="1" fill="#c9965c"/><rect x="6" y="11" width="1" height="1" fill="#8a5a2a"/><rect x="1" y="12" width="5" height="1" fill="#6a4018"/><rect x="6" y="12" width="1" height="1" fill="#8a5a2a"/><rect x="1" y="13" width="6" height="1" fill="#1a0e05"/><rect x="11" y="2" width="4" height="1" fill="#a85e22"/><rect x="10" y="3" width="1" height="1" fill="#a85e22"/><rect x="11" y="3" width="4" height="1" fill="#e8a766"/><rect x="15" y="3" width="1" height="1" fill="#a85e22"/><rect x="10" y="4" width="1" height="1" fill="#a85e22"/><rect x="11" y="4" width="1" height="1" fill="#e8a766"/><rect x="12" y="4" width="1" height="1" fill="#f6d9b8"/><rect x="13" y="4" width="2" height="1" fill="#e8a766"/><rect x="15" y="4" width="1" height="1" fill="#a85e22"/><rect x="10" y="5" width="1" height="1" fill="#a85e22"/><rect x="11" y="5" width="1" height="1" fill="#f6d9b8"/><rect x="12" y="5" width="1" height="1" fill="#20120a"/><rect x="13" y="5" width="2" height="1" fill="#e8a766"/><rect x="15" y="5" width="1" height="1" fill="#a85e22"/><rect x="10" y="6" width="1" height="1" fill="#a85e22"/><rect x="11" y="6" width="4" height="1" fill="#e8a766"/><rect x="15" y="6" width="1" height="1" fill="#a85e22"/><rect x="10" y="7" width="1" height="1" fill="#a85e22"/><rect x="11" y="7" width="4" height="1" fill="#e8a766"/><rect x="15" y="7" width="1" height="1" fill="#a85e22"/><rect x="10" y="8" width="1" height="1" fill="#a85e22"/><rect x="11" y="8" width="2" height="1" fill="#e8a766"/><rect x="13" y="8" width="1" height="1" fill="#b02a1c"/><rect x="14" y="8" width="1" height="1" fill="#e8a766"/><rect x="15" y="8" width="1" height="1" fill="#a85e22"/><rect x="10" y="9" width="1" height="1" fill="#a85e22"/><rect x="11" y="9" width="1" height="1" fill="#e8a766"/><rect x="12" y="9" width="1" height="1" fill="#b02a1c"/><rect x="13" y="9" width="1" height="1" fill="#e8a766"/><rect x="14" y="9" width="1" height="1" fill="#a85e22"/><rect x="10" y="10" width="1" height="1" fill="#a85e22"/><rect x="11" y="10" width="3" height="1" fill="#e8a766"/><rect x="14" y="10" width="1" height="1" fill="#a85e22"/><rect x="11" y="11" width="3" height="1" fill="#a85e22"/><rect x="12" y="12" width="1" height="1" fill="#a87a3c"/><rect x="12" y="13" width="1" height="1" fill="#a87a3c"/><rect x="12" y="14" width="1" height="1" fill="#a87a3c"/><rect x="26" y="6" width="1" height="1" fill="#000"/><rect x="30" y="6" width="1" height="1" fill="#000"/><rect x="24" y="7" width="1" height="1" fill="#000"/><rect x="27" y="7" width="3" height="1" fill="#000"/><rect x="32" y="7" width="1" height="1" fill="#000"/><rect x="25" y="8" width="2" height="1" fill="#000"/><rect x="27" y="8" width="3" height="1" fill="#10105c"/><rect x="30" y="8" width="2" height="1" fill="#000"/><rect x="24" y="9" width="1" height="1" fill="#000"/><rect x="25" y="9" width="1" height="1" fill="#fff"/><rect x="26" y="9" width="5" height="1" fill="#10105c"/><rect x="31" y="9" width="1" height="1" fill="#fff"/><rect x="32" y="9" width="1" height="1" fill="#000"/><rect x="23" y="10" width="1" height="1" fill="#000"/><rect x="24" y="10" width="2" height="1" fill="#fff"/><rect x="26" y="10" width="5" height="1" fill="#10105c"/><rect x="31" y="10" width="2" height="1" fill="#fff"/><rect x="33" y="10" width="1" height="1" fill="#000"/><rect x="24" y="11" width="2" height="1" fill="#000"/><rect x="26" y="11" width="5" height="1" fill="#10105c"/><rect x="31" y="11" width="2" height="1" fill="#000"/><rect x="26" y="12" width="5" height="1" fill="#000"/><rect x="52" y="4" width="2" height="1" fill="#000"/><rect x="51" y="5" width="3" height="1" fill="#000"/><rect x="50" y="6" width="1" height="1" fill="#000"/><rect x="51" y="6" width="1" height="1" fill="#e8dc5a"/><rect x="52" y="6" width="1" height="1" fill="#000"/><rect x="49" y="7" width="1" height="1" fill="#000"/><rect x="50" y="7" width="1" height="1" fill="#e8dc5a"/><rect x="51" y="7" width="1" height="1" fill="#000"/><rect x="45" y="8" width="4" height="1" fill="#000"/><rect x="49" y="8" width="1" height="1" fill="#e8dc5a"/><rect x="50" y="8" width="1" height="1" fill="#000"/><rect x="44" y="9" width="2" height="1" fill="#000"/><rect x="47" y="9" width="1" height="1" fill="#000"/><rect x="48" y="9" width="1" height="1" fill="#e8dc5a"/><rect x="49" y="9" width="1" height="1" fill="#000"/><rect x="51" y="9" width="1" height="1" fill="#000"/><rect x="44" y="10" width="1" height="1" fill="#000"/><rect x="47" y="10" width="2" height="1" fill="#000"/><rect x="51" y="10" width="3" height="1" fill="#000"/><rect x="44" y="11" width="1" height="1" fill="#000"/><rect x="51" y="11" width="3" height="1" fill="#000"/><rect x="44" y="12" width="2" height="1" fill="#000"/><rect x="51" y="12" width="3" height="1" fill="#000"/><rect x="43" y="13" width="1" height="1" fill="#000"/><rect x="45" y="13" width="9" height="1" fill="#000"/><rect x="51" y="14" width="3" height="1" fill="#000"/><path shape-rendering="auto" d="M62.6 5.5 L71.5 14.4 M71.5 5.5 L62.6 14.4" stroke="#000" stroke-width="1.7"/></svg></div>

<h2 style="left:71px;top:502px">Espacios Virtuales</h2>
<div class="gl" style="left:71px;top:518px;width:695px"></div>
<div class="th" style="left:77px;top:529px">Nombre</div>
<div class="th" style="left:630px;top:529px">Operaciones</div>
<div class="ol" style="left:71px;top:547px;width:667px"></div>
<div class="abs" style="left:738px;top:548px;width:27px;height:1px;background:#e3bd7a"></div>
<div class="row odd" style="top:549px;height:22px"><a style="letter-spacing:0.1px">INFORMACIÓN JE POLITÉCNICA SECTOR A</a></div>

<!-- sidebar -->
<h2 style="left:831px;top:167px">Usuarios en línea</h2>
<div class="gl s" style="left:831px;top:183px;width:175px"></div>
<div class="side" style="left:831px;top:191px;width:175px">En este momento hay <em>376 usuarios</em> y <em>48 invitados</em> en línea.</div>
<h2 style="left:831px;top:280px">Mi CVUEx</h2>
<div class="gl s" style="left:831px;top:296px;width:175px"></div>
<ul style="left:851px;top:304px">
  <li style="top:0"><i></i><span style="color:#000">Aulas</span></li>
  <li style="top:20px"><i></i><a>Oficina de ayuda</a></li>
  <li style="top:40.6px"><i></i><a>Noticias y enlaces</a></li>
</ul>
<h2 style="left:827px;top:391px">Síguenos en...</h2>
<div class="gl s" style="left:827px;top:407px;width:175px"></div>

<!-- twitter -->
<svg class="abs" style="left:857px;top:414px" width="50" height="50" viewBox="0 0 50 50">
  <rect width="50" height="50" fill="#0daaec"/>
  <path fill="#fff" transform="translate(9.6,11.8) scale(1.26)" d="M24 2.6c-.9.4-1.8.7-2.8.8 1-.6 1.800-1.600 2.200-2.700-1 .6-2 1-3.100 1.200C19.400.9 18.100.3 16.700.3c-2.700 0-4.900 2.200-4.900 4.900 0 .4 0 .8.100 1.100C7.700 6.100 4.100 4.100 1.700 1.200c-.4.700-.7 1.600-.7 2.500 0 1.700.900 3.200 2.200 4.100-.8 0-1.600-.2-2.200-.6v.1c0 2.400 1.700 4.400 3.900 4.800-.4.100-.8.200-1.300.2-.3 0-.6 0-.9-.1.600 2 2.400 3.400 4.600 3.400-1.700 1.300-3.800 2.100-6.100 2.100-.4 0-.8 0-1.200-.1 2.200 1.400 4.800 2.200 7.500 2.200 9.100 0 14-7.500 14-14v-.600c1-.7 1.800-1.600 2.500-2.500z"/>
</svg>
<!-- facebook -->
<svg class="abs" style="left:931px;top:414px" width="50" height="50" viewBox="0 0 50 50">
  <rect width="50" height="50" rx="3" fill="#3d5a98"/>
  <rect x="3.4" y="39" width="43" height="7" fill="#6d84b4"/>
  <path fill="#fff" d="M28.300 46 V28 H23.700 V21.200 H28.300 V16.500 C28.300 10.500 32 7 37.500 7 H43.200 V13.600 H39.800 C37.700 13.600 37 14.600 37 16.700 V21.200 H43.200 V28 H37 V46 Z"/>
</svg>
<!-- tuenti -->
<svg class="abs" style="left:845px;top:484px" width="135" height="38" viewBox="845 484 135 38">
  <path d="M855 489.200 H870 Q876 489.200 876 495.200 V515.200 H855 Q849 515.200 849 509.200 V495.200 Q849 489.200 855 489.200 Z" fill="#1676d2"/>
  <text x="0" y="0" transform="translate(856.2,506.8) rotate(12)" font-family="DejaVu Sans, sans-serif" font-weight="bold" font-size="17" fill="#fff">;)</text>
  <text x="879.2" y="514.8" font-family="DejaVu Sans, sans-serif" font-size="31.8" textLength="95.6" lengthAdjust="spacingAndGlyphs" fill="#333" stroke="#333" stroke-width="1.8">tuenti</text>
</svg>
<!-- youtube -->
<svg class="abs" style="left:850px;top:535px" width="135" height="55" viewBox="850 535 135 55">
  <defs><linearGradient id="yt" x1="0" y1="0" x2="0" y2="1"><stop offset="0" stop-color="#ee3a2c"/><stop offset="0.5" stop-color="#df2118"/><stop offset="1" stop-color="#bd130c"/></linearGradient></defs>
  <rect x="900.300" y="540.500" width="65" height="42.700" rx="10" fill="url(#yt)"/>
  <text x="854.8" y="574.600" font-family="Liberation Sans, sans-serif" font-weight="bold" font-size="38.400" textLength="42.6" lengthAdjust="spacingAndGlyphs" fill="#333" stroke="#333" stroke-width="0.5">You</text>
  <text x="906.400" y="575.600" font-family="Liberation Sans, sans-serif" font-weight="bold" font-size="39.800" textLength="54.6" lengthAdjust="spacingAndGlyphs" fill="#fff" stroke="#fff" stroke-width="0.5">Tube</text>
  <text x="967.6" y="557.6" font-family="Liberation Sans, sans-serif" font-weight="bold" font-size="5.500" fill="#333">TM</text>
</svg>

<div id="frame-top" class="abs"></div><div id="frame-left" class="abs"></div>
<div id="frame-top2" class="abs"></div><div id="frame-left2" class="abs"></div>
</body>
</html>
